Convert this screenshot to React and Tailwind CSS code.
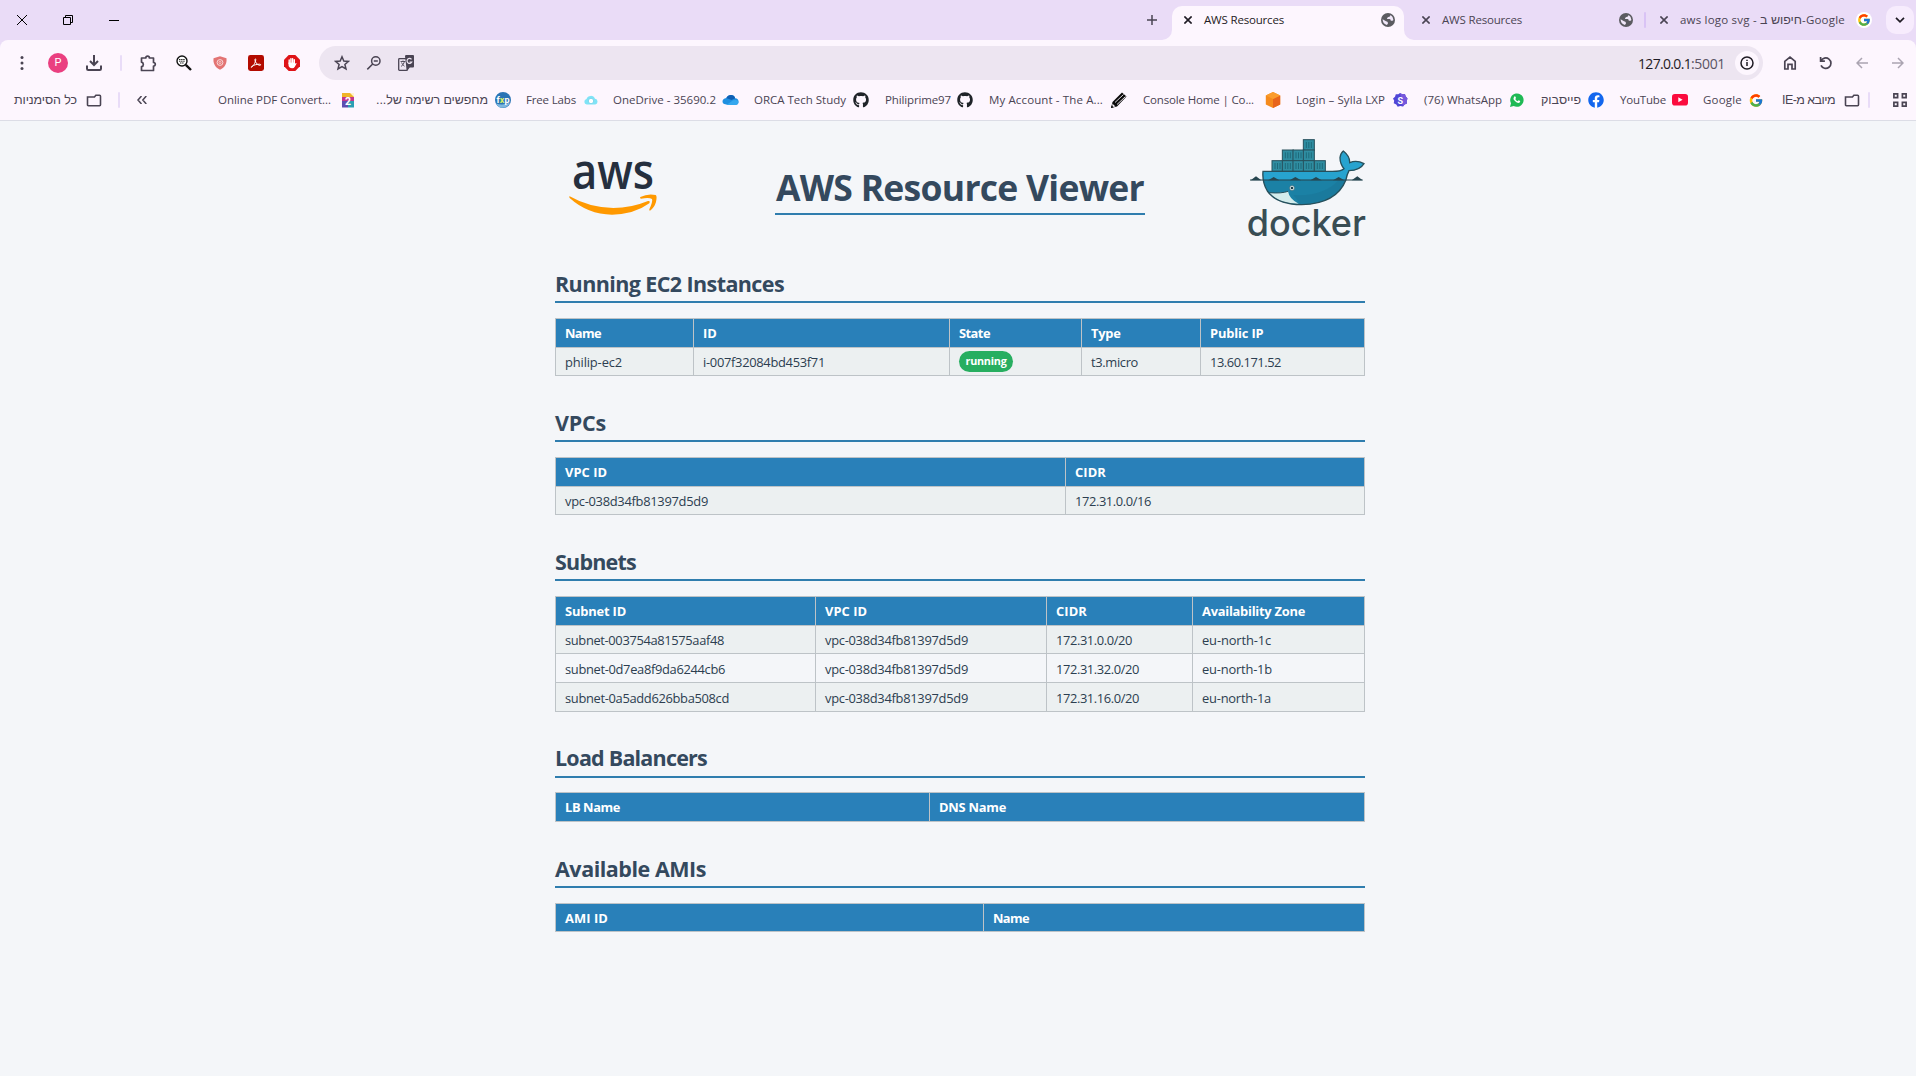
import React, { useLayoutEffect, useRef, useState } from "react";
import { FaGithub, FaFacebook } from "react-icons/fa";
import { FcGoogle } from "react-icons/fc";

/* Text tracked so that it fills exactly `w` pixels. */
function Fit({ w, children, className = "" }) {
  const ref = useRef(null);
  const [spacing, setSpacing] = useState(null);
  useLayoutEffect(() => {
    const natural = ref.current.getBoundingClientRect().width;
    setSpacing((w - natural) / children.length);
  }, [w, children]);
  return (
    <span
      ref={ref}
      className={"inline-block shrink-0 whitespace-pre " + className}
      style={spacing === null ? undefined : { letterSpacing: spacing + "px" }}
    >
      {children}
    </span>
  );
}

function Cross({ className = "" }) {
  return (
    <svg viewBox="0 0 8 8" className={"h-2 w-2 shrink-0 " + className} stroke="currentColor" strokeWidth="1.6">
      <path d="M0.4 0.4 7.6 7.6M7.6 0.4 0.4 7.6" />
    </svg>
  );
}

function Globe() {
  return (
    <svg viewBox="0 0 14 14" className="ml-auto h-[14px] w-[14px] shrink-0">
      <circle cx="7" cy="7" r="7" fill="#5b5b60" />
      <path d="M9.600 1.900Q9.300 3.800 7.400 4.100 5.900 4.400 6 6h2.600q1.200.2 1.200 1.700h1.300q1 .1 1.300-.6Q12.300 3.500 9.600 1.900z" fill="#f1e8f9" />
      <path d="M1.600 6.300 5 8.300q1.800.2 2 1.700.1 1.300-1.300 1.900Q1.700 10.800 1.600 6.300z" fill="#f1e8f9" />
    </svg>
  );
}

function WindowButtons() {
  return (
    <div className="flex h-10 items-center text-black">
      <div className="flex w-[44px] justify-center">
        <svg viewBox="0 0 10 10" className="h-[10px] w-[10px]" stroke="currentColor" strokeWidth="1">
          <path d="M0 0 10 10M10 0 0 10" />
        </svg>
      </div>
      <div className="flex w-[48px] justify-center">
        <svg viewBox="0 0 10 10" className="h-[10px] w-[10px]" fill="none" stroke="currentColor" strokeWidth="1">
          <path d="M0.5 2.5h7v7h-7zM2.5 2.5v-2h7v7h-2" />
        </svg>
      </div>
      <div className="flex w-[44px] justify-center">
        <div className="h-px w-[10px] bg-black" />
      </div>
    </div>
  );
}

function TabStrip() {
  return (
    <div className="flex h-10 bg-[#eadcf7] text-[11.5px] text-[#4a4453]">
      <WindowButtons />
      <div className="flex-1" />
      <div className="flex w-8 items-center justify-center pb-px">
        <svg viewBox="0 0 10 10" className="h-[10px] w-[10px]" stroke="currentColor" strokeWidth="1.5">
          <path d="M5 0v10M0 5h10" />
        </svg>
      </div>
      <div className="w-1" />
      <div className="h-10 w-[232px] pt-1.5">
        <div className="relative flex h-[34px] items-center rounded-t-[10px] bg-[#fdf6fe] pr-[9px] pb-[6px] pl-[12px] text-[#1f1b24]">
          <svg viewBox="0 0 10 10" className="absolute bottom-0 -left-[10px] h-[10px] w-[10px]" fill="#fdf6fe">
            <path d="M10 0A10 10 0 0 1 0 10h10z" />
          </svg>
          <svg viewBox="0 0 10 10" className="absolute -right-[10px] bottom-0 h-[10px] w-[10px]" fill="#fdf6fe">
            <path d="M0 0A10 10 0 0 0 10 10H0z" />
          </svg>
          <Cross />
          <Fit w={80} className="ml-3">AWS Resources</Fit>
          <Globe />
        </div>
      </div>
      <div className="flex w-[240px] items-center pr-[11px] pl-[18px]">
        <Cross />
        <Fit w={80} className="ml-3">AWS Resources</Fit>
        <Globe />
      </div>
      <div className="mt-3 h-4 w-0.5 rounded bg-[#d9c3f5]" />
      <div className="flex w-[268px] items-center pl-[14px]">
        <Cross />
        <span dir="ltr" className="ml-3 flex w-[165px] items-baseline">
          <Fit w={80}>{"aws logo svg - "}</Fit>
          <Fit w={42} className="font-[Liberation_Sans] text-[12.500px]">חיפוש ב</Fit>
          <Fit w={43}>-Google</Fit>
        </span>
        <span className="ml-[11px] flex h-4 w-4 items-center justify-center rounded-full bg-white">
          <FcGoogle className="h-[14px] w-[14px]" />
        </span>
        <span className="ml-auto flex h-7 w-7 items-center justify-center rounded-[10px] bg-[#f7ecfd] text-[#1f1b24]">
          <svg viewBox="0 0 10 6" className="h-[6px] w-[10px]" fill="none" stroke="currentColor" strokeWidth="1.7">
            <path d="M1 0.8 5 4.8 9 0.8" />
          </svg>
        </span>
      </div>
      <div className="w-0.5" />
    </div>
  );
}

function Slot({ children }) {
  return <div className="flex h-9 w-9 shrink-0 items-center justify-center">{children}</div>;
}

const line = { fill: "none", stroke: "currentColor", strokeWidth: 1.7 };

function Toolbar() {
  return (
    <div className="flex h-[46px] items-center pl-1 text-[#4a4453]">
      <Slot>
        <svg viewBox="0 0 4 14" className="h-[14px] w-1" fill="currentColor">
          <circle cx="2" cy="1.6" r="1.5" />
          <circle cx="2" cy="7" r="1.5" />
          <circle cx="2" cy="12.4" r="1.5" />
        </svg>
      </Slot>
      <Slot>
        <span className="flex h-5 w-5 items-center justify-center rounded-full bg-[#ea3f80] font-[Roboto] text-[11px] text-white">P</span>
      </Slot>
      <Slot>
        <svg viewBox="0 0 16 16" className="h-4 w-4" {...line} strokeWidth="2">
          <path d="M8 0v9.5M4 6l4 4 4-4M1 10.5v3.2q0 1.3 1.3 1.3h11.4q1.3 0 1.3-1.3v-3.2" />
        </svg>
      </Slot>
      <div className="ml-2 h-4 w-0.5 rounded bg-[#e9dcf8]" />
      <div className="w-2" />
      <Slot>
        <svg viewBox="0 0 17 17" className="h-[17px] w-[17px]" {...line}>
          <path d="M1.5 3h4.3a1.8 1.8 0 0 1 3.6 0h4.1v4.5a1.8 1.8 0 0 1 0 3.6v4.4h-12v-3.8a2.3 2.3 0 0 0 0-4.5z" strokeLinejoin="round" />
        </svg>
      </Slot>
      <Slot>
        <svg viewBox="0 0 16 16" className="h-4 w-4" fill="none" stroke="#111">
          <circle cx="6" cy="6" r="5" fill="#fff" strokeWidth="1.4" />
          <path d="M3 4.5h6M3 6.2h6M4 8h4" strokeWidth="0.9" strokeDasharray="1.5 0.6" />
          <path d="M9.8 9.8 15 15" strokeWidth="2.4" />
        </svg>
      </Slot>
      <Slot>
        <svg viewBox="0 0 16 16" className="h-4 w-4">
          <path d="M8 1.3 14.5 3.3C15 8.5 13 12.5 8 14.8 3 12.5 1 8.5 1.5 3.3z" fill="#e37474" />
          <circle cx="8" cy="7.5" r="2.9" fill="none" stroke="#fbe3e3" strokeWidth="0.9" />
          <circle cx="8" cy="7.5" r="1.1" fill="none" stroke="#fbe3e3" strokeWidth="0.7" />
        </svg>
      </Slot>
      <Slot>
        <svg viewBox="0 0 16 16" className="h-4 w-4">
          <rect width="16" height="16" rx="2.4" fill="#b30b00" />
          <path
            d="M3.4 12.3c1.6-.5 3.9-4.3 4.4-7.6.1-1.1-1-1.1-.9.1.3 2.7 2.4 5.3 5 5.5 1.2 0 1-1-.2-1.1-2.6-.1-6.2.9-7.9 2.1-.8.6-.9 1.1-.4 1z"
            fill="none"
            stroke="#fff"
            strokeWidth="1"
          />
        </svg>
      </Slot>
      <Slot>
        <svg viewBox="0 0 16 16" className="h-4 w-4">
          <path d="M4.7 0h6.6L16 4.7v6.6L11.3 16H4.7L0 11.3V4.7z" fill="#df1317" />
          <path d="M5.200 8.600V5M6.900 7.600V3.600M8.600 7.600V3.600M10.300 8.600V4.800" stroke="#fff" strokeWidth="1.400" strokeLinecap="round" />
          <path d="M4.500 7.500h6.500v1.300l1-.8q.8 0 .5.800l-1.700 3q-.8 1.500-2.600 1.500-3.700-.2-3.700-3.200z" fill="#fff" />
        </svg>
      </Slot>

      <div className="ml-[9px] flex h-[34px] w-[1444px] items-center rounded-full bg-[#ede5f1] pr-1 pl-[15px]">
        <svg viewBox="0 0 16 16" className="h-4 w-4" {...line} strokeWidth="1.5">
          <path d="M8 1.8 9.8 6l4.6.4-3.5 3 1.1 4.5L8 11.5l-4 2.4 1.1-4.5-3.5-3L6.200 6z" />
        </svg>
        <svg viewBox="0 0 16 16" className="ml-4 h-4 w-4" {...line} strokeWidth="1.5">
          <circle cx="9.800" cy="6" r="4.200" />
          <path d="M6.700 9 1.300 14.400M7.800 6h4" />
        </svg>
        <svg viewBox="0 0 16 16" className="ml-4 h-4 w-4">
          <rect x="0.700" y="3.700" width="8.600" height="11.600" rx="0.800" fill="none" stroke="#4a4453" strokeWidth="1.3" />
          <path d="M7 1.200Q7 0 8.200 0H15q1 0 1 1v10.600q0 1-1 1h-3.200L9 16l-.600-3.400z" fill="#4a4453" />
          <path d="M13.500 4.300a2.500 2.500 0 1 0 .3 2.700h-2.200" fill="none" stroke="#ede5f1" strokeWidth="1.200" />
          <path d="M2.500 6.500h5M5 5.500v1M6.500 6.500Q5.500 10 3 11.500M3.500 7.500Q4.500 10 6.500 11.200" fill="none" stroke="#4a4453" strokeWidth="0.900" />
        </svg>
        <div className="ml-auto flex text-[14px] text-[#1f1b24]">
          <Fit w={53}>127.0.0.1</Fit>
          <Fit w={34} className="text-[#5a5363]">:5001</Fit>
        </div>
        <span className="ml-[10px] flex h-6 w-6 items-center justify-center rounded-full bg-[#fdf6fe] text-[#1f1b24]">
          <svg viewBox="0 0 14 14" className="h-[14px] w-[14px]" {...line} strokeWidth="1.5">
            <circle cx="7" cy="7" r="6" />
            <path d="M7 6v4M7 3.700v1.400" />
          </svg>
        </span>
      </div>
      <div className="w-[9px]" />
      <Slot>
        <svg viewBox="0 0 14 14" className="h-[14px] w-[14px]" {...line}>
          <path d="M1.800 13V5.300L7 1.200l5.200 4.100V13H9V8.300H5V13z" />
        </svg>
      </Slot>
      <Slot>
        <svg viewBox="0 0 14 14" className="h-[14px] w-[14px]" {...line}>
          <path d="M1.600 1v4.200h4.300M2 5A5.200 5.200 0 1 1 2 9.300" />
        </svg>
      </Slot>
      <Slot>
        <svg viewBox="0 0 12 12" className="h-3 w-3 text-[#aba4b1]" {...line} strokeWidth="1.5">
          <path d="M12 6H1M6 1 1 6l5 5" />
        </svg>
      </Slot>
      <Slot>
        <svg viewBox="0 0 12 12" className="h-3 w-3 text-[#aba4b1]" {...line} strokeWidth="1.5">
          <path d="M0 6h11M6 1l5 5-5 5" />
        </svg>
      </Slot>
    </div>
  );
}

const Folder = () => (
  <svg viewBox="0 0 16 14" className="h-[13px] w-4" fill="none" stroke="#4a4453" strokeWidth="1.7">
    <path d="M1 3.200h7.500l1.500-1.900h4q1 0 1 1v9.400q0 1-1 1H2q-1 0-1-1z" />
  </svg>
);

const PdfIcon = () => (
  <svg viewBox="0 0 16 16" className="h-4 w-4">
    <rect x="2" y="1" width="12" height="4.500" fill="#f0b429" />
    <rect x="2" y="5" width="12" height="4" fill="#c2378c" />
    <rect x="2" y="9" width="6" height="6.500" fill="#5d4db0" />
    <rect x="8" y="9" width="6" height="6.500" fill="#2b9fb4" />
    <path d="M10 1h4v4z" fill="#fff3d0" />
    <text x="8" y="13" textAnchor="middle" fontSize="10.500" fontWeight="700" fontFamily="Roboto, sans-serif" fill="#fff">2</text>
  </svg>
);

const FxpIcon = () => (
  <svg viewBox="0 0 16 16" className="h-4 w-4">
    <circle cx="8" cy="8" r="8" fill="#2a74b5" />
    <path d="M1 11.500q7 2.500 14-1-2 5-7 5.200T1 11.500z" fill="#7fb7df" />
    <text x="8" y="10.800" textAnchor="middle" fontSize="9" fontWeight="700" fontFamily="Roboto, sans-serif" fill="#fff">
      f<tspan fill="#d9ef62">x</tspan>p
    </text>
  </svg>
);

const LabsIcon = () => (
  <svg viewBox="0 0 16 16" className="h-4 w-4">
    <path d="M5 12.500H3.800A2.800 2.800 0 0 1 3.500 7 4.500 4.500 0 0 1 12 6.800a2.900 2.900 0 0 1 .3 5.700H11" fill="#7fe3f6" />
    <circle cx="8" cy="9" r="2.700" fill="#fff" stroke="#6ccfe8" strokeWidth="0.800" />
  </svg>
);

const OneDriveIcon = () => (
  <svg viewBox="0 0 17 16" className="h-4 w-[17px]">
    <path d="M5 12.500Q.5 12.500.5 9.500T4.300 6Q5.800 3 9 3t4.200 3.300Q16.500 6.700 16.500 9.500T13.500 12.800H4z" fill="#1f8fe0" />
    <path d="M4.300 6Q5.800 3 9 3t4.200 3.300L9.500 8z" fill="#0f5fb4" />
    <path d="M4.500 13 11 8.300Q16.500 7 16.500 10T13.500 13z" fill="#35a7ee" />
  </svg>
);

const PencilIcon = () => (
  <svg viewBox="0 0 16 16" className="h-4 w-4">
    <path d="M0 16 1.500 10 11 .5l4.500 4L6 14.500z" fill="#0a0a0a" />
    <path d="M4 10.500 12.500 2.500M6 12.500 14.500 4.500" stroke="#fdf6fe" strokeWidth="0.900" />
    <path d="M1.300 11.500 4.500 14.600 1.500 15z" fill="#fdf6fe" />
    <path d="M0 16l.7-2.400 1.800 1.700z" fill="#0a0a0a" />
  </svg>
);

const CubeIcon = () => (
  <svg viewBox="0 0 16 16" className="h-4 w-4">
    <path d="M8 0 15.200 3.500V12.500L8 16 .8 12.500V3.500z" fill="#f58a1d" />
    <path d="M8 7 15.200 3.500V12.500L8 16z" fill="#e8641b" />
    <path d="M8 0 15.200 3.500 8 7 .8 3.500z" fill="#fb9c2c" />
  </svg>
);

const SyllaIcon = () => (
  <svg viewBox="0 0 16 16" className="h-4 w-4">
    <path d="M8 1l2.300 1.200 2.600-.1.900 2.500L15.500 6.500 14.700 9l.3 2.500-2.400 1L11 14.600l-2.700-.5-2.600.7-1.500-2.200L1.700 11.300 2.200 8.700 1 6.400 3 4.700 3.800 2.200l2.500.1z" fill="#5146d6" />
    <path d="M8 1l2.300 1.200 2.600-.1.900 2.500L15.500 6.500 14.700 9l.3 2.500-2.400 1L11 14.600z" fill="#7658dc" />
    <text x="8.200" y="11.500" textAnchor="middle" fontSize="9" fontWeight="700" fontFamily="Roboto, sans-serif" fill="#fff">S</text>
  </svg>
);

const WhatsAppIcon = () => (
  <span className="flex h-[14px] w-4 items-center justify-center">
    <svg viewBox="0 0 14 14" className="h-[14px] w-[14px]">
      <path d="M0 14 1 10.300A6.700 6.700 0 1 1 3.700 13z" fill="#1fb955" />
      <path d="M4.300 3.500q.8-.6 1.200.2l.5 1.200-.7 1q.8 1.600 2.400 2.300l.9-1 1.600.8q.3 1.500-1.600 2-1.600.1-3.700-1.900T3.600 5z" fill="#fff" />
    </svg>
  </span>
);

const YouTubeIcon = () => (
  <svg viewBox="0 0 16 12" className="h-3 w-4">
    <rect width="16" height="11.500" rx="2.800" fill="#fb0c3e" />
    <path d="M6.300 3.200v5.100l4.300-2.500z" fill="#fff" />
  </svg>
);

const GitHub = () => <FaGithub className="h-4 w-4 text-[#1f2328]" />;
const Facebook = () => (
  <span className="flex h-4 w-4 items-center justify-center rounded-full bg-white">
    <FaFacebook className="h-4 w-4 text-[#1366ee]" />
  </span>
);
const GoogleG = () => <FcGoogle className="h-[15px] w-4" />;

const bookmarks = [
  ["Online PDF Convert...", 113, PdfIcon],
  ["מחפשים רשימה של...", 112, FxpIcon, true],
  ["Free Labs", 50, LabsIcon],
  ["OneDrive - 35690.2", 103, OneDriveIcon],
  ["ORCA Tech Study", 92, GitHub],
  ["Philiprime97", 66, GitHub],
  ["My Account - The A...", 114, PencilIcon],
  ["Console Home | Co...", 111, CubeIcon],
  ["Login – Sylla LXP", 89, SyllaIcon],
  ["(76) WhatsApp", 78, WhatsAppIcon],
  ["פייסבוק", 40, Facebook, true],
  ["YouTube", 46, YouTubeIcon],
  ["Google", 39, GoogleG],
];

/* Width of each bookmark button, label and icon both aligned to its end. */
const bookmarkWidths = [
  "w-[138px]", "w-[155px]", "w-[88px]", "w-[140px]", "w-[130px]", "w-[104px]", "w-[154px]",
  "w-[154px]", "w-[127px]", "w-[117px]", "w-[79px]", "w-[84px]", "w-[76px]",
];
const labelGaps = [
  "mr-[9px]", "mr-[7px]", "mr-[7px]", "mr-[6px]", "mr-[7px]", "mr-[6px]", "mr-[8px]",
  "mr-[11px]", "mr-[7px]", "mr-[7px]", "mr-[7px]", "mr-[6px]", "mr-[6px]",
];

function BookmarkBar() {
  return (
    <div className="flex h-[35px] items-center border-b border-[#dcdde6] pb-[6px] text-[11.5px] text-[#4a4453]">
      <div dir="rtl" className="ml-[14px] flex w-[63px] font-[Liberation_Sans] text-[12.500px]">
        <Fit w={63}>כל הסימניות</Fit>
      </div>
      <div className="ml-[9px]"><Folder /></div>
      <div className="ml-4 h-4 w-0.5 rounded bg-[#e9dcf8]" />
      <svg viewBox="0 0 10 8" className="ml-[17px] h-2 w-[10px]" {...line} strokeWidth="1.5">
        <path d="M4.500 0 1 4l3.500 4M9.300 0 5.800 4l3.500 4" />
      </svg>
      <div className="ml-[71px] flex">
        {bookmarks.map(([label, w, Icon, hebrew], i) => (
          <div key={label} className={"flex h-5 items-center justify-end " + bookmarkWidths[i]}>
            <div dir={hebrew ? "rtl" : "ltr"} className={labelGaps[i] + (hebrew ? " font-[Liberation_Sans] text-[12.500px]" : "")}>
              <Fit w={w}>{label}</Fit>
            </div>
            <Icon />
          </div>
        ))}
      </div>
      <div dir="rtl" className="ml-[18px] flex w-[53px] font-[Liberation_Sans] text-[12.500px]">
        <Fit w={53}>מיובא מ-IE</Fit>
      </div>
      <div className="ml-[9px]"><Folder /></div>
      <div className="ml-[8px] h-4 w-0.5 rounded bg-[#e9dcf8]" />
      <svg viewBox="0 0 14 14" className="ml-[23px] h-[14px] w-[14px]" {...line}>
        <path d="M.9.9h3.700v3.700H.9zM9.400.9h3.700v3.700H9.400zM.9 9.400h3.700v3.700H.9zM9.400 9.400h3.700v3.700H9.400z" />
      </svg>
    </div>
  );
}

function AwsLogo() {
  return (
    <svg viewBox="90 122 262 162" className="mt-[40px] ml-[14px] h-[54px] w-[88px] shrink-0 overflow-visible">
      <text x="98" y="205" fontSize="146" fontWeight="600" textLength="246" lengthAdjust="spacingAndGlyphs" fontFamily="'Open Sans', sans-serif" fill="#252f3e">
        aws
      </text>
      <path d="M91 228Q150 262 222 263 275 263 326 242 334 241 330 249 285 282 218 283 145 282 91 233 88 229 91 228z" fill="#ff9900" />
      <path d="M303 230Q325 219 349 224 354 227 350 245 345 262 332 271 329 271 330 267 341 243 338 236 330 231 305 235 300 233 303 230z" fill="#ff9900" />
    </svg>
  );
}

const containers = [
  [1030, 58], [967, 89], [999, 89], [1030, 89], [936, 121], [967, 121], [999, 121], [1030, 121], [1063, 121],
];

function DockerLogo() {
  return (
    <svg viewBox="864 56 351 294" className="mt-[18px] h-[98px] w-[117px] shrink-0 overflow-visible">
      {containers.map(([x, y]) => (
        <g key={x + "-" + y}>
          <rect x={x} y={y} width="33" height="32" fill="#2f8da1" stroke="#27505c" strokeWidth="3" />
          <path d={`M${x + 9} ${y + 7}v18M${x + 16.500} ${y + 7}v18M${x + 24} ${y + 7}v18`} stroke="#1a6373" strokeWidth="2.500" />
        </g>
      ))}
      <path
        d="M909 153H1110Q1143 154 1152 145 1140 130 1140 112 1142 98 1150 92 1170 108 1169 127 1190 118 1212 130 1200 150 1167 151 1160 165 1158 178 1130 250 1025 253 950 252 922 212 906 185 909 153z"
        fill="#1b81a5"
      />
      <path d="M909 153H1110Q1143 154 1152 145 1140 130 1140 112 1142 98 1150 92 1170 108 1169 127 1190 118 1212 130 1200 150 1167 151 1160 165 1157 178H910z" fill="#27a3cf" />
      <path d="M1150 195Q1110 250 1020 250L1000 224Q1090 230 1135 180H1155z" fill="#1a7395" opacity="0.500" />
      <path d="M928 217Q965 220 984 213 988 237 1016 250 955 252 928 217z" fill="#d3ecec" />
      <path d="M928 217Q965 220 984 213" fill="none" stroke="#27505c" strokeWidth="3" />
      <path
        d="M909 153H1110Q1143 154 1152 145 1140 130 1140 112 1142 98 1150 92 1170 108 1169 127 1190 118 1212 130 1200 150 1167 151 1160 165 1158 178 1130 250 1025 253 950 252 922 212 906 185 909 153z"
        fill="none"
        stroke="#27505c"
        strokeWidth="4"
      />
      <path d="M870 179H1208" stroke="#274650" strokeWidth="3" />
      <path d="M872 180 888 168 904 180zM924 180 941 170 958 180zM989 180 1006 170 1023 180zM1051 180 1068 170 1085 180zM1119 180 1136 170 1153 180zM1175 180 1192 168 1208 180z" fill="#274650" />
      <circle cx="996" cy="203" r="7.500" fill="#e6f3f5" stroke="#27505c" strokeWidth="1.500" />
      <circle cx="996" cy="203" r="4" fill="#1f3f4a" />
      <text x="860" y="348" fontSize="110" fontWeight="500" textLength="358" lengthAdjust="spacingAndGlyphs" fontFamily="Inter, sans-serif" fill="#394d54">
        docker
      </text>
    </svg>
  );
}

function Section({ title, titleWidth, className, headPad = "pb-[5px]", children }) {
  return (
    <section className={className}>
      <h2 className={"flex h-9 items-end border-b-2 border-[#2f7dae] text-[21.500px] leading-[24px] font-bold text-[#34495e] " + headPad}>
        <Fit w={titleWidth}>{title}</Fit>
      </h2>
      {children}
    </section>
  );
}

/* Cells are [text, width of text]; `cols` is a grid template class. */
function Table({ cols, head, rows = [], rowHeights = [], headHeight = "h-[29px]", className = "mt-[15px]" }) {
  return (
    <div className={"border-t border-l border-[#bdc3c7] text-[12.900px] " + className}>
      <div className={"grid bg-[#2980b9] font-bold text-white " + cols + " " + headHeight}>
        {head.map(([t, w]) => (
          <div key={t} className="flex items-center border-r border-b border-[#bdc3c7] pt-[2px] pl-[9px]">
            <Fit w={w}>{t}</Fit>
          </div>
        ))}
      </div>
      {rows.map((row, i) => (
        <div key={i} className={"grid text-[#2c3e50] " + cols + " " + rowHeights[i] + (i % 2 === 0 ? " bg-[#ecf0f1]" : "")}>
          {row.map(([t, w, badge], j) => (
            <div key={j} className="flex items-center border-r border-b border-[#bdc3c7] pt-[3px] pl-[9px]">
              {badge ? (
                <span className="-mt-[3px] flex h-[21px] w-[54px] items-center justify-center rounded-full bg-[#27ae60] text-[10.800px] font-bold text-white">
                  <Fit w={w}>{t}</Fit>
                </span>
              ) : (
                <Fit w={w}>{t}</Fit>
              )}
            </div>
          ))}
        </div>
      ))}
    </div>
  );
}

export default function App() {
  return (
    <div className="h-[1076px] w-[1916px] overflow-hidden bg-[#f4f6f9] font-['Open_Sans',sans-serif]">
      <header>
        <TabStrip />
        <div className="bg-[#eadcf7]">
          <div className="h-[81px] rounded-t-lg bg-[#fdf6fe]">
            <Toolbar />
            <BookmarkBar />
          </div>
        </div>
      </header>

      <main className="ml-[555px] w-[810px]">
        <div className="flex h-[145px] items-start">
          <AwsLogo />
          <h1 className="mt-[38px] ml-[118px] flex h-[56px] w-[370px] items-center justify-center border-b-2 border-[#2f7dae] pt-[3px] text-[35.500px] font-bold text-[#34495e]">
            <Fit w={368}>AWS Resource Viewer</Fit>
          </h1>
          <div className="ml-auto"><DockerLogo /></div>
        </div>

        <Section title="Running EC2 Instances" titleWidth={229} className="mt-px">
          <Table
            cols="grid-cols-[138px_256px_132px_119px_164px]"
            head={[["Name", 36], ["ID", 14], ["State", 31], ["Type", 29.5], ["Public IP", 53.5]]}
            rows={[[["philip-ec2", 57], ["i-007f32084bd453f71", 122], ["running", 41, true], ["t3.micro", 47], ["13.60.171.52", 71]]]}
            rowHeights={["h-[28px]"]}
          />
        </Section>

        <Section title="VPCs" titleWidth={51} className="mt-[30px]">
          <Table
            cols="grid-cols-[510px_299px]"
            head={[["VPC ID", 42], ["CIDR", 31]]}
            rows={[[["vpc-038d34fb81397d5d9", 143], ["172.31.0.0/16", 76]]]}
            rowHeights={["h-[28px]"]}
          />
        </Section>

        <Section title="Subnets" titleWidth={81} className="mt-[30px]">
          <Table
            cols="grid-cols-[260px_231px_146px_172px]"
            head={[["Subnet ID", 61], ["VPC ID", 42], ["CIDR", 31], ["Availability Zone", 103]]}
            rows={[
              [["subnet-003754a81575aaf48", 159], ["vpc-038d34fb81397d5d9", 143], ["172.31.0.0/20", 76], ["eu-north-1c", 69]],
              [["subnet-0d7ea8f9da6244cb6", 160], ["vpc-038d34fb81397d5d9", 143], ["172.31.32.0/20", 83], ["eu-north-1b", 70]],
              [["subnet-0a5add626bba508cd", 164], ["vpc-038d34fb81397d5d9", 143], ["172.31.16.0/20", 83], ["eu-north-1a", 69]],
            ]}
            rowHeights={["h-[28px]", "h-[29px]", "h-[29px]"]}
          />
        </Section>

        <Section title="Load Balancers" titleWidth={152} className="mt-[30px]" headPad="pb-[6px]">
          <Table cols="grid-cols-[374px_435px]" head={[["LB Name", 55], ["DNS Name", 67]]} className="mt-[14px]" />
        </Section>

        <Section title="Available AMIs" titleWidth={151} className="mt-[30px]">
          <Table cols="grid-cols-[428px_381px]" head={[["AMI ID", 43], ["Name", 36]]} headHeight="h-[28px]" />
        </Section>
      </main>
    </div>
  );
}
